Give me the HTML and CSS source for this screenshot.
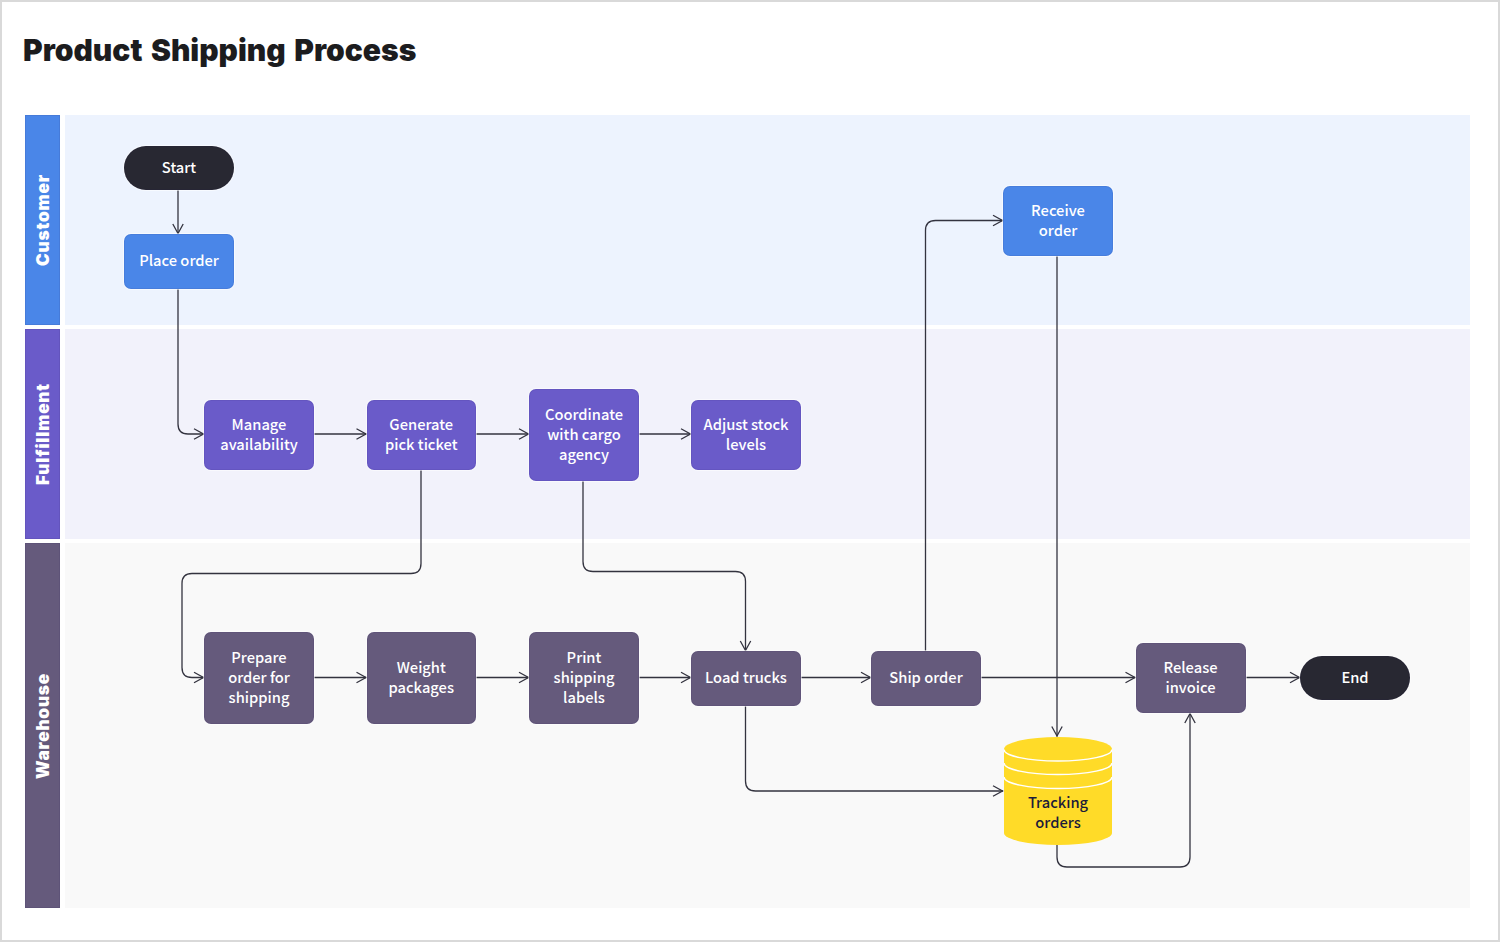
FILE: index.html
```html
<!DOCTYPE html>
<html lang="en">
<head>
<meta charset="utf-8">
<title>Product Shipping Process</title>
<link rel="stylesheet" href="styles.css">
</head>
<body>
<main class="frame">
  <h1 class="title">Product Shipping Process</h1>
  <section class="board">
    <div class="lane lane-customer">
      <div class="lane-head"><span class="lane-label">Customer</span></div>
      <div class="lane-body"></div>
    </div>
    <div class="lane lane-fulfillment">
      <div class="lane-head"><span class="lane-label">Fulfillment</span></div>
      <div class="lane-body"></div>
    </div>
    <div class="lane lane-warehouse">
      <div class="lane-head"><span class="lane-label">Warehouse</span></div>
      <div class="lane-body"></div>
    </div>

    <svg class="links" viewBox="25 115 1445 793" width="1445" height="793" aria-hidden="true">
      <defs>
        <marker id="arrow" markerUnits="userSpaceOnUse" markerWidth="14" markerHeight="14" refX="11" refY="7" orient="auto">
          <path d="M1 1.8 L10.5 7 L1 12.2" class="arrow-head"/>
        </marker>
      </defs>
      <g class="link-lines">
        <path d="M178 190 V234"/>
        <path d="M178 289 V424 Q178 434 188 434 H204"/>
        <path d="M314 434 H366.5"/>
        <path d="M476 434 H529"/>
        <path d="M639 434 H691"/>
        <path d="M421 470 V563.5 Q421 573.5 411 573.5 H192 Q182 573.5 182 583.5 V667.5 Q182 677.5 192 677.5 H204"/>
        <path d="M583 481 V561.5 Q583 571.5 593 571.5 H735.5 Q745.5 571.5 745.5 581.5 V651"/>
        <path d="M314 677.5 H366.5"/>
        <path d="M476 677.5 H529"/>
        <path d="M639 677.5 H691"/>
        <path d="M801 677.5 H871"/>
        <path d="M981 677.5 H1135.5"/>
        <path d="M1245.5 677.5 H1300"/>
        <path d="M925.5 651 V230.5 Q925.5 220.5 935.5 220.5 H1003"/>
        <path d="M1057 256 V736.5"/>
        <path d="M745.5 706 V781 Q745.5 791 755.5 791 H1003"/>
        <path d="M1057 845 V857 Q1057 867 1067 867 H1180 Q1190 867 1190 857 V713"/>
      </g>
    </svg>

    <div class="node terminal n-start">Start</div>
    <div class="node blue n-place">Place order</div>
    <div class="node blue n-receive">Receive<br>order</div>

    <div class="node purple n-manage">Manage<br>availability</div>
    <div class="node purple n-generate">Generate<br>pick ticket</div>
    <div class="node purple n-coordinate">Coordinate<br>with cargo<br>agency</div>
    <div class="node purple n-adjust">Adjust stock<br>levels</div>

    <div class="node mauve n-prepare">Prepare<br>order for<br>shipping</div>
    <div class="node mauve n-weight">Weight<br>packages</div>
    <div class="node mauve n-print">Print<br>shipping<br>labels</div>
    <div class="node mauve n-load">Load trucks</div>
    <div class="node mauve n-ship">Ship order</div>
    <div class="node mauve n-release">Release<br>invoice</div>
    <div class="node terminal n-end">End</div>

    <div class="database">
      <svg class="database-shape" viewBox="0 0 108 108" width="108" height="108" aria-hidden="true">
        <path class="db-fill" d="M0 12 A54 12 0 0 1 108 12 V96 A54 12 0 0 1 0 96 Z"/>
        <path class="db-band" d="M0 12.5 A54 11.5 0 0 0 108 12.5"/>
        <path class="db-band" d="M0 26 A54 11.5 0 0 0 108 26"/>
        <path class="db-band" d="M0 40 A54 11.5 0 0 0 108 40"/>
      </svg>
      <div class="database-label">Tracking<br>orders</div>
    </div>
  </section>
</main>
</body>
</html>
```

FILE: styles.css
```css
* {
  box-sizing: border-box;
}

html,
body {
  margin: 0;
  padding: 0;
  background: #ffffff;
}

.frame {
  width: 1500px;
  height: 942px;
  border: 2px solid #d9d9d9;
  padding: 0 0 0 21px;
  overflow: hidden;
}

.title {
  margin: 0;
  padding-top: 29px;
  height: 113px;
  font-family: "Inter", "Liberation Sans", sans-serif;
  font-weight: 900;
  font-size: 30px;
  line-height: 38px;
  word-spacing: 2.5px;
  color: #1c1c1e;
}

.board {
  position: relative;
  margin-left: 2px;
  width: 1444.5px;
  height: 793px;
  display: flex;
  flex-direction: column;
  gap: 4px;
}

.lane {
  display: flex;
  gap: 4.5px;
}

.lane-customer,
.lane-fulfillment {
  height: 210px;
}

.lane-warehouse {
  height: 365px;
}

.lane-head {
  width: 35px;
  flex: none;
  display: flex;
  align-items: center;
  justify-content: flex-start;
  padding-left: 8px;
  box-shadow: inset 0 0 0 1px rgba(40, 30, 90, 0.1);
}

.lane-label {
  writing-mode: vertical-rl;
  transform: rotate(180deg);
  font-family: "Inter", "Liberation Sans", sans-serif;
  font-weight: 900;
  font-size: 17.2px;
  line-height: 20px;
  letter-spacing: 0.8px;
  color: #ffffff;
}

.lane-body {
  flex: 1;
}

.lane-customer .lane-head { background: #4a86e8; }
.lane-customer .lane-body { background: #edf3fe; }
.lane-fulfillment .lane-head { background: #6a5bc9; }
.lane-fulfillment .lane-body { background: #f2f2fb; }
.lane-warehouse .lane-head { background: #655a7c; }
.lane-warehouse .lane-body { background: #f9f9f9; }

.links {
  position: absolute;
  left: 0;
  top: 0;
  overflow: visible;
}

.link-lines path {
  fill: none;
  stroke: #33333f;
  stroke-width: 1.3;
  marker-end: url(#arrow);
}

.arrow-head {
  fill: none;
  stroke: #33333f;
  stroke-width: 1.3;
}

.node {
  position: absolute;
  width: 110px;
  padding-bottom: 3px;
  display: flex;
  align-items: center;
  justify-content: center;
  text-align: center;
  font-family: "Noto Sans CJK JP", "Noto Sans", sans-serif;
  font-weight: 500;
  font-size: 14.7px;
  line-height: 20px;
  color: #ffffff;
  border-radius: 7px;
  box-shadow: 0 0 0 1px rgba(255, 255, 255, 0.55), inset 0 0 0 1px rgba(40, 30, 90, 0.08);
}

.terminal {
  background: #282832;
  border-radius: 22px;
}

.blue { background: #4a86e8; }
.purple { background: #6a5bc9; }
.mauve { background: #655a7c; }

.n-start { left: 99px; top: 31px; height: 44px; }
.n-place { left: 99px; top: 119px; height: 55px; }
.n-receive { left: 978px; top: 71px; height: 70px; padding-bottom: 2px; }
.n-manage { left: 179px; top: 285px; height: 70px; }
.n-generate { left: 341.5px; top: 285px; height: 70px; width: 109.5px; }
.n-coordinate { left: 504px; top: 274px; height: 92px; padding-bottom: 2px; }
.n-adjust { left: 666px; top: 285px; height: 70px; }
.n-prepare { left: 179px; top: 517px; height: 92px; padding-bottom: 2px; }
.n-weight { left: 341.5px; top: 517px; height: 92px; width: 109.5px; padding-bottom: 2px; }
.n-print { left: 504px; top: 517px; height: 92px; padding-bottom: 2px; }
.n-load { left: 666px; top: 536px; height: 55px; }
.n-ship { left: 846px; top: 536px; height: 55px; }
.n-release { left: 1110.5px; top: 528px; height: 70px; }
.n-end { left: 1275px; top: 541px; height: 44px; }

.database {
  position: absolute;
  left: 979px;
  top: 622px;
  width: 108px;
  height: 108px;
}

.database-shape {
  display: block;
}

.db-fill {
  fill: #ffdb28;
}

.db-band {
  fill: none;
  stroke: #ffffff;
  stroke-width: 1.5;
}

.database-label {
  position: absolute;
  left: 0;
  right: 0;
  top: 54.5px;
  text-align: center;
  font-family: "Noto Sans CJK JP", "Noto Sans", sans-serif;
  font-weight: 500;
  font-size: 14.7px;
  line-height: 20px;
  color: #1c1c3a;
}
```
